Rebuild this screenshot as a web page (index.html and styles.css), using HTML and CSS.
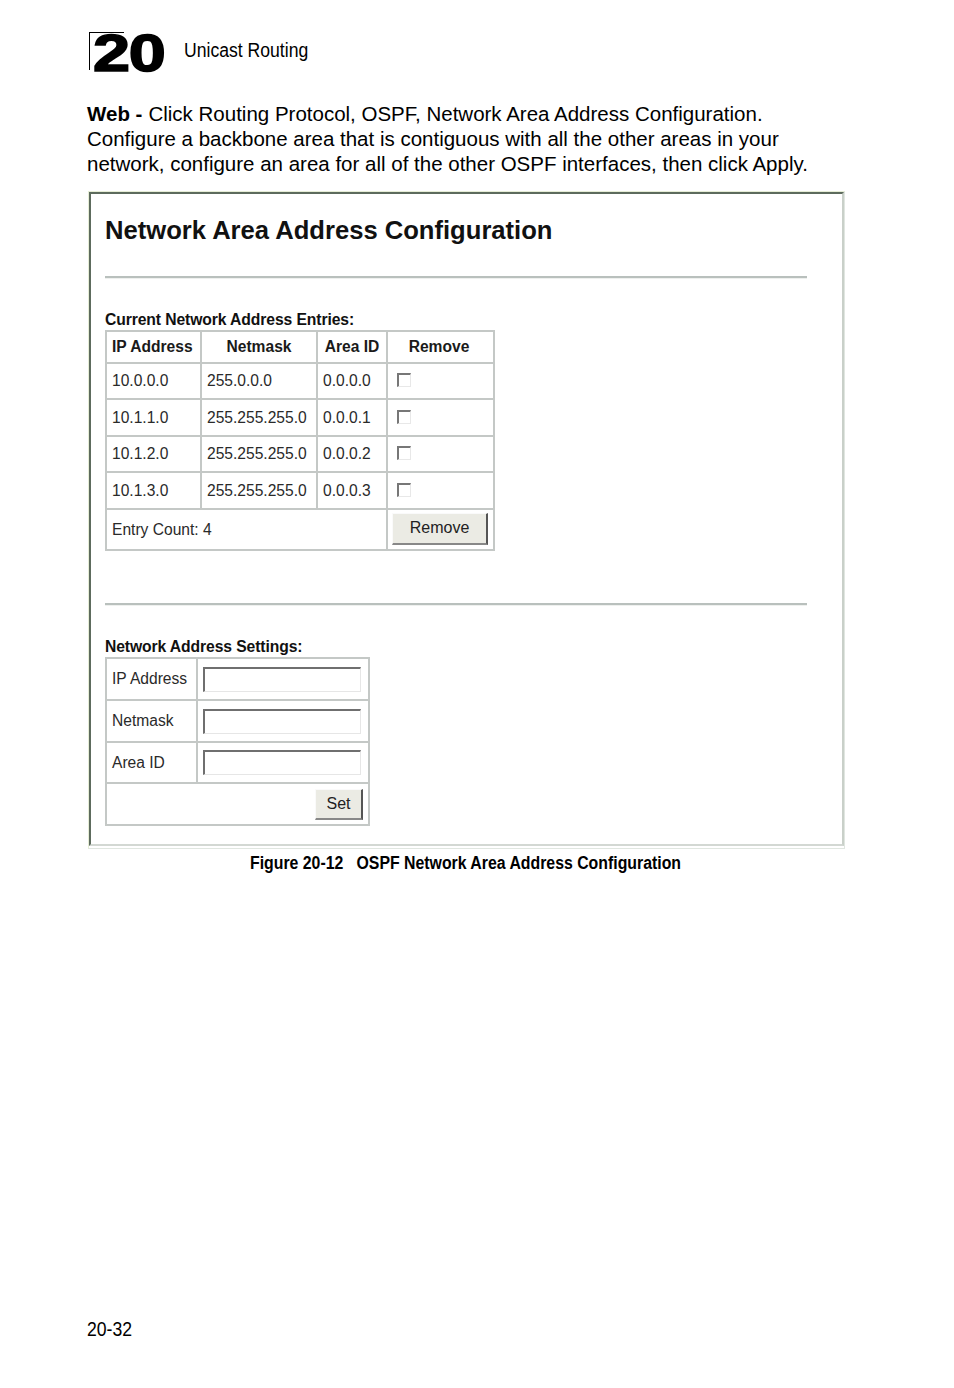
FILE: index.html
```html
<!DOCTYPE html>
<html>
<head>
<meta charset="utf-8">
<link rel="stylesheet" href="styles.css">
</head>
<body>
<div class="page">
  <div class="chapter">
    <div class="chapnum"><span class="num">20</span></div>
    <div class="chaptitle"><span class="narrow">Unicast Routing</span></div>
  </div>
  <p class="intro"><b class="lead">Web -</b>Click Routing Protocol, OSPF, Network Area Address Configuration. Configure a backbone area that is contiguous with all the other areas in your network, configure an area for all of the other OSPF interfaces, then click Apply.</p>

  <div class="frame">
    <div class="screen">
      <h1 class="title">Network Area Address Configuration</h1>
      <div class="rule first"></div>
      <div class="label l1">Current Network Address Entries:</div>
      <table class="grid entries">
        <colgroup><col class="c1"><col class="c2"><col class="c3"><col class="c4"></colgroup>
        <tr class="head"><th>IP Address</th><th>Netmask</th><th>Area ID</th><th>Remove</th></tr>
        <tr class="r1"><td>10.0.0.0</td><td>255.0.0.0</td><td>0.0.0.0</td><td><span class="chk"></span></td></tr>
        <tr class="r2"><td>10.1.1.0</td><td>255.255.255.0</td><td>0.0.0.1</td><td><span class="chk"></span></td></tr>
        <tr class="r3"><td>10.1.2.0</td><td>255.255.255.0</td><td>0.0.0.2</td><td><span class="chk"></span></td></tr>
        <tr class="r4"><td>10.1.3.0</td><td>255.255.255.0</td><td>0.0.0.3</td><td><span class="chk"></span></td></tr>
        <tr class="foot"><td colspan="3">Entry Count: 4</td><td class="btncell"><span class="btn remove">Remove</span></td></tr>
      </table>
      <div class="rule second"></div>
      <div class="label l2">Network Address Settings:</div>
      <table class="grid settings">
        <colgroup><col class="s1"><col class="s2"></colgroup>
        <tr><td>IP Address</td><td><span class="field"></span></td></tr>
        <tr><td>Netmask</td><td><span class="field"></span></td></tr>
        <tr class="short"><td>Area ID</td><td><span class="field"></span></td></tr>
        <tr class="setrow"><td colspan="2" class="right"><span class="btn set">Set</span></td></tr>
      </table>
    </div>
  </div>
  <div class="caption"><span class="narrow">Figure 20-12&nbsp;&nbsp;&nbsp;OSPF Network Area Address Configuration</span></div>
  <div class="pageno"><span class="narrow">20-32</span></div>
</div>
</body>
</html>
```
FILE: styles.css
```css
html, body {
  margin: 0;
  padding: 0;
  background: #ffffff;
}
body {
  width: 954px;
  height: 1388px;
  font-family: "Liberation Sans", Arial, sans-serif;
  color: #000;
}
.page {
  padding-left: 87px;
  padding-top: 32px;
  position: relative;
  height: 1356px;
}
.narrow {
  display: inline-block;
  white-space: nowrap;
  transform: scaleX(0.88);
  transform-origin: left center;
}

/* chapter header */
.chapter {
  display: flex;
  align-items: flex-start;
  height: 40px;
}
.chapnum {
  width: 76px;
  height: 38px;
  margin-left: 2px;
  position: relative;
  border-left: 1px solid #000;
}
.chapnum::before {
  content: "";
  position: absolute;
  left: 0;
  top: 0;
  width: 34px;
  border-top: 1px solid #000;
}
.num {
  display: block;
  font-weight: bold;
  font-size: 52px;
  line-height: 38px;
  height: 38px;
  letter-spacing: -1px;
  -webkit-text-stroke: 1.6px #000;
  transform: scaleX(1.28);
  transform-origin: left center;
  margin-left: 3px;
  margin-top: 2px;
}
.chaptitle {
  font-size: 20px;
  margin-left: 18px;
  margin-top: 6px;
  line-height: 24px;
}

/* intro */
.intro {
  margin: 29px 0 0 0;
  width: 730px;
  font-size: 20.5px;
  line-height: 25px;
}
.lead {
  margin-right: 6px;
}

/* screenshot frame */
.frame {
  margin-top: 15px;
  margin-left: 1px;
  width: 755px;
  height: 656px;
  border: 1px solid #e6edd6;
  border-right-color: #e0e6e0;
  border-bottom-color: #e0e6e0;
}
.screen {
  height: 650px;
  border-top: 2px solid #5d6b5d;
  border-left: 2px solid #5d6b5d;
  border-right: 2px solid #c9d0c9;
  border-bottom: 2px solid #d3d8d3;
  padding-left: 14px;
  color: #222;
}
.title {
  margin: 0;
  padding-top: 21px;
  font-size: 25.6px;
  line-height: 30px;
  font-weight: bold;
  color: #111;
}
.rule {
  width: 702px;
  height: 0;
  border-top: 2px solid #b9c0bd;
  border-bottom: 1px solid #eef0ee;
}
.rule.first { margin-top: 31px; }
.rule.second { margin-top: 52px; }
.label {
  font-size: 15.7px;
  font-weight: bold;
  line-height: 18px;
  color: #111;
  letter-spacing: -0.1px;
}
.label.l1 { margin-top: 32px; }
.label.l2 { margin-top: 32px; }

.grid {
  border-collapse: collapse;
  border: 2px solid #c4c8c6;
  font-size: 15.6px;
  color: #2a2a2a;
}
.grid td, .grid th {
  border: 2px solid #c4c8c6;
  padding: 0 0 0 5px;
  text-align: left;
  vertical-align: middle;
}
.entries { margin-top: 1px; }
.entries .c1 { width: 95px; }
.entries .c2 { width: 116px; }
.entries .c3 { width: 70px; }
.entries .c4 { width: 107px; }
.grid th {
  font-weight: bold;
  text-align: center;
  padding: 0;
  color: #1a1a1a;
}
.entries tr.head { height: 32px; }
.entries tr.head th:first-child { text-align: left; padding-left: 5px; }
.entries tr.head th:last-child { padding-right: 3px; }
.entries tr.r1 { height: 36px; }
.entries tr.r2 { height: 37px; }
.entries tr.r3 { height: 36px; }
.entries tr.r4 { height: 37px; }
.entries tr.foot { height: 41px; }
.entries td:last-child { padding-left: 9px; }
.chk {
  display: inline-block;
  width: 11px;
  height: 11px;
  border-top: 2px solid #777;
  border-left: 2px solid #777;
  border-right: 1px solid #e8e8e8;
  border-bottom: 1px solid #e8e8e8;
  vertical-align: middle;
  margin-top: -3px;
}
.entries td.btncell { padding-left: 4px; }
.btn {
  display: inline-flex;
  align-items: center;
  justify-content: center;
  box-sizing: border-box;
  background: #ebebe4;
  border-top: 1px solid #fafafa;
  border-left: 1px solid #fafafa;
  border-right: 2px solid #555;
  border-bottom: 2px solid #888;
  color: #222;
  font-size: 16px;
  vertical-align: middle;
}
.btn.remove { width: 96px; height: 32px; margin-top: -2px; }

.settings { margin-top: 1px; }
.settings .s1 { width: 91px; }
.settings .s2 { width: 172px; }
.settings tr { height: 42px; }
.settings tr.short { height: 41px; }
.settings td:nth-child(2) { padding-left: 5px; }
.field {
  display: block;
  box-sizing: border-box;
  width: 158px;
  height: 25px;
  background: #fff;
  border-top: 2px solid #6f6f6f;
  border-left: 2px solid #6f6f6f;
  border-right: 1px solid #e6e6e6;
  border-bottom: 1px solid #e6e6e6;
}
.settings td.right { text-align: right; padding-right: 5px; }
.btn.set { width: 48px; height: 31px; }

.caption {
  margin-top: 3px;
  margin-left: 163px;
  font-weight: bold;
  font-size: 18px;
  line-height: 22px;
}
.pageno {
  position: absolute;
  left: 87px;
  top: 1317px;
  font-size: 20px;
  line-height: 24px;
}
```
